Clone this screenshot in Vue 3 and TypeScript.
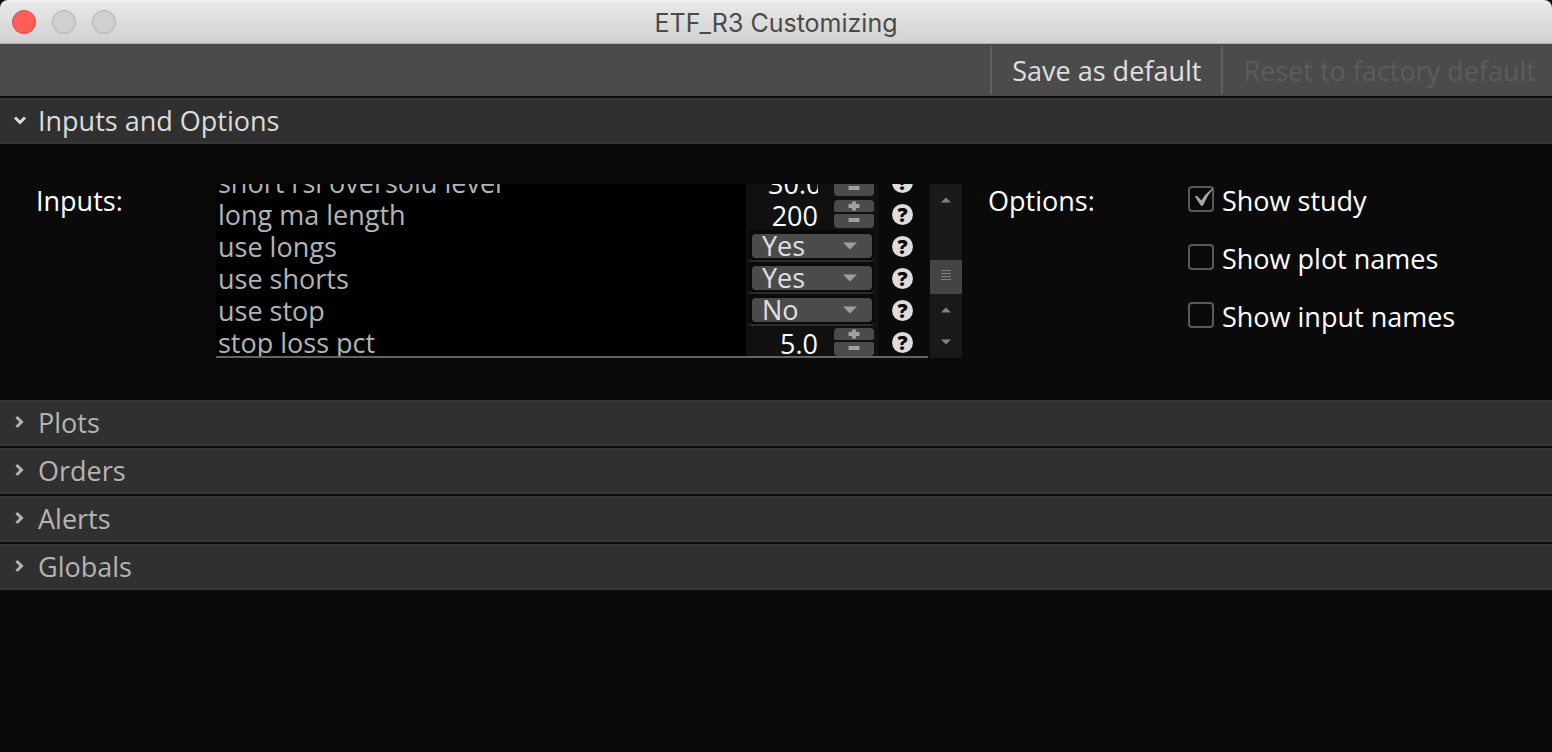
<script setup lang="ts">
import { reactive, ref } from 'vue'

interface StudyInput {
  id: string
  name: string
  kind: 'number' | 'choice'
  value: string
}

interface StudyOption {
  id: string
  label: string
  checked: boolean
}

const inputs = reactive<StudyInput[]>([
  { id: 'short-rsi', name: 'short rsi oversold level', kind: 'number', value: '30.0' },
  { id: 'long-ma', name: 'long ma length', kind: 'number', value: '200' },
  { id: 'use-longs', name: 'use longs', kind: 'choice', value: 'Yes' },
  { id: 'use-shorts', name: 'use shorts', kind: 'choice', value: 'Yes' },
  { id: 'use-stop', name: 'use stop', kind: 'choice', value: 'No' },
  { id: 'stop-loss', name: 'stop loss pct', kind: 'number', value: '5.0' },
])

const options = reactive<StudyOption[]>([
  { id: 'show-study', label: 'Show study', checked: true },
  { id: 'show-plots', label: 'Show plot names', checked: false },
  { id: 'show-inputs', label: 'Show input names', checked: false },
])

const collapsed = ['Plots', 'Orders', 'Alerts', 'Globals']
const open = ref(true)

function step(item: StudyInput, delta: number) {
  const decimals = item.value.includes('.') ? 1 : 0
  item.value = (Number(item.value) + delta).toFixed(decimals)
}
</script>

<template>
  <div class="window">
    <header class="titlebar">
      <div class="lights">
        <button class="light close" aria-label="Close"></button>
        <button class="light" aria-label="Minimize" disabled></button>
        <button class="light" aria-label="Zoom" disabled></button>
      </div>
      <h1>ETF_R3 Customizing</h1>
    </header>

    <nav class="toolbar">
      <button>Save as default</button>
      <button disabled>Reset to factory default</button>
    </nav>

    <main class="sections">
      <button class="bar active" :aria-expanded="open" @click="open = !open">
        <svg class="chevron" viewBox="0 0 16 16" :class="{ folded: !open }">
          <path d="M3 4.5 L8 9.5 L13 4.5" />
        </svg>
        <span>Inputs and Options</span>
      </button>

      <section v-show="open" class="panel">
        <h2>Inputs:</h2>
        <div class="list">
          <div class="viewport">
            <table>
              <tbody>
                <tr v-for="item in inputs" :key="item.id">
                  <td class="name"><label :for="item.id">{{ item.name }}</label></td>
                  <td class="value">
                    <div v-if="item.kind === 'number'" class="spinner">
                      <input :id="item.id" v-model="item.value" type="text" />
                      <span class="steps">
                        <button class="up" :aria-label="'Increase ' + item.name" @click="step(item, 1)">
                          <svg viewBox="0 0 12 12"><path d="M0.5 6 H11.5 M6 1.5 V10.5" /></svg>
                        </button>
                        <button class="down" :aria-label="'Decrease ' + item.name" @click="step(item, -1)">
                          <svg viewBox="0 0 12 12"><path d="M0.5 6 H11.5" /></svg>
                        </button>
                      </span>
                    </div>
                    <div v-else class="choice">
                      <select :id="item.id" v-model="item.value">
                        <option>Yes</option>
                        <option>No</option>
                      </select>
                      <svg class="caret" viewBox="0 0 14 8"><path d="M0 0.5 H14 L7 7.5 Z" /></svg>
                    </div>
                  </td>
                  <td class="help">
                    <button :aria-label="'Help on ' + item.name">?</button>
                  </td>
                </tr>
              </tbody>
            </table>
          </div>
          <div class="scrollbar">
            <button aria-label="Scroll up"><svg viewBox="0 0 10 6"><path d="M0 5.5 L5 0.5 L10 5.5 Z" /></svg></button>
            <span class="track"></span>
            <span class="thumb"><i></i><i></i><i></i><i></i></span>
            <button aria-label="Scroll line up"><svg viewBox="0 0 10 6"><path d="M0 5.5 L5 0.5 L10 5.5 Z" /></svg></button>
            <button aria-label="Scroll line down"><svg viewBox="0 0 10 6"><path d="M0 0.5 L5 5.5 L10 0.5 Z" /></svg></button>
          </div>
        </div>

        <h2>Options:</h2>
        <div class="options">
          <div v-for="opt in options" :key="opt.id" class="option">
            <span class="box">
              <input :id="opt.id" v-model="opt.checked" type="checkbox" />
              <svg v-if="opt.checked" viewBox="0 0 26 26">
                <path d="M7 10.5 Q8.5 9 9.5 10.5 L13.5 14.5 Q17.5 7 26 1.5 Q19.5 9 15.5 18.5 Q14 21 12.5 19 Q9 14 7 10.5 Z" />
              </svg>
            </span>
            <label :for="opt.id">{{ opt.label }}</label>
          </div>
        </div>
      </section>

      <button v-for="title in collapsed" :key="title" class="bar" aria-expanded="false">
        <svg class="chevron folded" viewBox="0 0 16 16">
          <path d="M4 4.5 L9 9.5 L14 4.5" />
        </svg>
        <span>{{ title }}</span>
      </button>
    </main>
  </div>
</template>

<style>
body {
  background: #0a0a0a;
}
</style>

<style scoped>
.window {
  min-height: 100vh;
  background: #0a0a0a;
  color: #fff;
  font-family: "Open Sans", "Noto Sans", sans-serif;
  font-size: 27px;
  line-height: 32px;
}

button,
input,
select {
  margin: 0;
  padding: 0;
  border: 0;
  background: none;
  color: inherit;
  font: inherit;
  appearance: none;
}

svg {
  display: block;
}

.titlebar {
  display: grid;
  grid-template-columns: 1fr auto 1fr;
  align-items: center;
  height: 44px;
  box-sizing: border-box;
  border-bottom: 1px solid #b0b0b0;
  border-radius: 8px 8px 0 0;
  background: linear-gradient(#f4f4f4, #e8e8e8 3px, #d1d1d1);
}

.titlebar h1 {
  margin: 0;
  padding-top: 2px;
  color: #4a4a4a;
  font-family: Inter, Roboto, sans-serif;
  font-size: 25px;
  font-weight: 400;
}

.lights {
  display: flex;
  gap: 16px;
  padding-left: 12px;
}

.light {
  width: 24px;
  height: 24px;
  box-sizing: border-box;
  border: 1px solid #b0b0b0;
  border-radius: 50%;
  background: #d0d0d0;
}

.light.close {
  border-color: #e2463f;
  background: #ff5f57;
}

.toolbar {
  display: flex;
  justify-content: flex-end;
  height: 52px;
  box-sizing: border-box;
  padding: 2px 0;
  background: #4b4b4b;
}

.toolbar button {
  padding: 2px 16px 0 20px;
  border-left: 2px solid #616161;
  color: #e0e0e0;
}

.toolbar button:first-child {
  padding-right: 20px;
}

.toolbar button:disabled {
  color: #5c5c5c;
}

.sections {
  display: flex;
  flex-direction: column;
  gap: 2px;
  padding-top: 2px;
}

.bar {
  display: flex;
  align-items: center;
  gap: 10px;
  height: 46px;
  box-sizing: border-box;
  padding-left: 12px;
  border-top: 2px solid #373737;
  border-bottom: 2px solid #373737;
  background: #303030;
  color: #b4b4b4;
  text-align: left;
}

.bar.active {
  color: #dcdcdc;
}

.chevron {
  width: 16px;
  height: 16px;
  fill: none;
  stroke: currentColor;
  stroke-width: 3;
}

.chevron.folded {
  transform: rotate(-90deg);
}

.panel {
  display: flex;
  align-items: flex-start;
  padding: 38px 0 40px 36px;
}

.panel h2 {
  flex: none;
  width: 180px;
  margin: 0;
  font-size: 27px;
  font-weight: 400;
  line-height: 34px;
}

.list {
  display: flex;
  flex: 1;
  gap: 2px;
  margin-right: 26px;
}

.list + h2 {
  width: 200px;
}

.viewport {
  display: flex;
  flex: 1;
  flex-direction: column;
  justify-content: flex-end;
  height: 172px;
  overflow: hidden;
  border-bottom: 2px solid #646464;
}

table {
  width: 100%;
  margin-bottom: -2px;
  border-collapse: collapse;
  table-layout: fixed;
}

td {
  height: 32px;
  padding: 0;
}

.name {
  padding-left: 2px;
  background: #000;
  color: #b4b4b4;
  white-space: nowrap;
}

.name label {
  display: block;
  padding-top: 2px;
  line-height: 30px;
}

.value {
  width: 132px;
  background: #101010;
}

.help {
  width: 50px;
}

.spinner {
  display: flex;
  align-items: center;
  justify-content: flex-end;
  gap: 16px;
  height: 32px;
  padding-right: 4px;
}

.spinner input {
  width: 50px;
  height: 32px;
  box-sizing: border-box;
  padding-top: 2px;
  line-height: 30px;
  text-align: right;
}

.steps {
  display: flex;
  flex-direction: column;
  gap: 2px;
  width: 40px;
}

.steps button {
  display: flex;
  align-items: center;
  justify-content: center;
  background: #4b4b4b;
}

.steps svg {
  width: 12px;
  height: 12px;
  stroke: #a0a0a0;
  stroke-width: 4;
}

.steps .up {
  height: 12px;
  border-radius: 4px 4px 2px 2px;
}

.steps .down {
  height: 14px;
  padding-bottom: 2px;
  border-radius: 2px 2px 4px 4px;
}

.choice {
  position: relative;
  height: 32px;
  box-sizing: border-box;
  margin: 0 4px 0 2px;
  padding: 4px 2px 0 4px;
  border-bottom: 2px solid #2c2c2c;
  border-radius: 4px;
  background: #0a0a0a;
}

.choice select {
  display: block;
  width: 100%;
  height: 24px;
  padding-left: 10px;
  border-radius: 4px;
  background: #4b4b4b;
  color: #e0e0e0;
  line-height: 24px;
}

.caret {
  position: absolute;
  top: 12px;
  right: 17px;
  width: 14px;
  height: 8px;
  fill: #a0a0a0;
  pointer-events: none;
}

.help button {
  display: block;
  width: 21px;
  height: 21px;
  margin-left: 14px;
  border-radius: 50%;
  background: #dcdcdc;
  color: #0a0a0a;
  font-size: 20px;
  font-weight: 800;
  line-height: 21px;
}

.scrollbar {
  display: flex;
  flex-direction: column;
  width: 32px;
  background: #191919;
}

.scrollbar button {
  display: flex;
  align-items: center;
  justify-content: center;
  height: 32px;
}

.scrollbar svg {
  width: 10px;
  height: 6px;
  fill: #828282;
}

.track {
  flex: 1;
}

.thumb {
  display: flex;
  flex-direction: column;
  align-items: center;
  gap: 2px;
  height: 34px;
  box-sizing: border-box;
  padding-top: 10px;
  background: #444;
}

.thumb i {
  width: 10px;
  height: 1px;
  background: #7d7d7d;
}

.options {
  display: flex;
  flex-direction: column;
  gap: 24px;
  width: 364px;
  line-height: 34px;
}

.option {
  display: flex;
  align-items: flex-start;
  gap: 8px;
}

.box {
  position: relative;
  width: 26px;
  height: 26px;
  margin-top: 2px;
}

.box input {
  display: block;
  width: 26px;
  height: 26px;
  box-sizing: border-box;
  border: 2px solid #5a5a5a;
  border-radius: 4px;
}

.box svg {
  position: absolute;
  inset: 0;
  fill: #a8a8a8;
  pointer-events: none;
}
</style>
